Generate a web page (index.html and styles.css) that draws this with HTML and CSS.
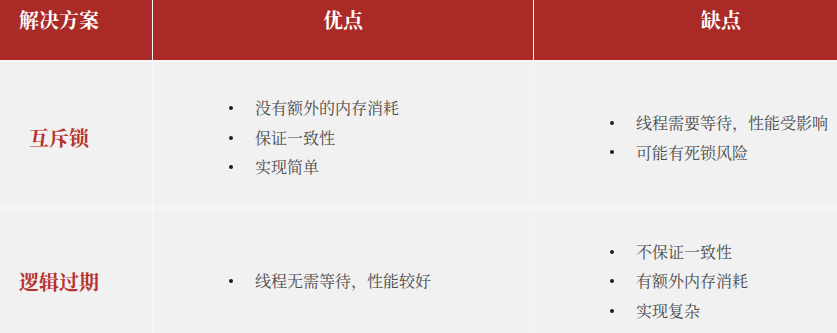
FILE: index.html
```html
<!DOCTYPE html>
<html lang="zh">
<head>
<meta charset="utf-8">
<link rel="stylesheet" href="styles.css">
</head>
<body>
<div class="frame">
<div class="table">
  <div class="th th-first">解决方案</div>
  <div class="th">优点</div>
  <div class="th">缺点</div>

  <div class="td label">互斥锁</div>
  <div class="td"><ul class="list"><li>没有额外的内存消耗</li><li>保证一致性</li><li>实现简单</li></ul></div>
  <div class="td"><ul class="list"><li>线程需要等待，性能受影响</li><li>可能有死锁风险</li></ul></div>

  <div class="td label row2">逻辑过期</div>
  <div class="td row2"><ul class="list"><li>线程无需等待，性能较好</li></ul></div>
  <div class="td row2"><ul class="list"><li>不保证一致性</li><li>有额外内存消耗</li><li>实现复杂</li></ul></div>
</div>
</div>
</body>
</html>
```

FILE: styles.css
```css
html, body {
  margin: 0;
  padding: 0;
  background: #ffffff;
}
.frame {
  width: 837px;
  height: 333px;
  overflow: hidden;
  font-family: "Noto Serif CJK SC", "Noto Sans CJK SC", serif;
}
.table {
  display: grid;
  grid-template-columns: 152px 380px 374px;
  grid-template-rows: 60px 145px 150px;
  column-gap: 1px;
  row-gap: 2px;
  width: 908px;
  background: #f7f7f7;
}
.th {
  background: #aa2a27;
  color: #ffffff;
  font-size: 20px;
  font-weight: 700;
  line-height: 28px;
  padding-top: 6px;
  text-align: center;
}
.th-first {
  padding-right: 34px;
}
.td {
  background: #f1f1f1;
  display: flex;
  align-items: center;
  padding-top: 6px;
  box-sizing: border-box;
}
.label {
  justify-content: center;
  padding-right: 34px;
  color: #b8302c;
  font-size: 20px;
  font-weight: 700;
}
.row2 {
  padding-top: 0;
  padding-bottom: 6px;
}
.list {
  list-style: none;
  margin: 0 0 0 76px;
  padding: 0;
  color: #4a4a4a;
  font-size: 16px;
  line-height: 29.5px;
}
.list li {
  display: flex;
  align-items: center;
}
.list li::before {
  content: "";
  width: 4px;
  height: 4px;
  border-radius: 50%;
  background: #1e1e1e;
  margin-right: 22px;
  flex: none;
}
```
